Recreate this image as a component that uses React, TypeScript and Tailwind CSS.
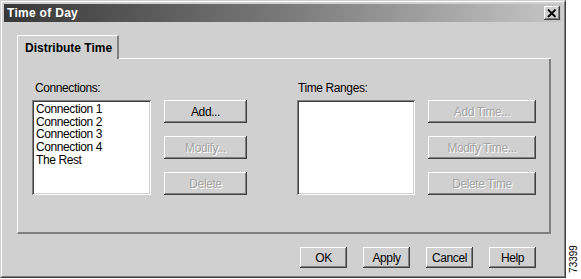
import React from "react";

const font = { fontFamily: '"Liberation Sans", Arial, sans-serif' };

function Btn({ label, w, h, disabled }: { label: string; w: string; h: string; disabled?: boolean }) {
  return (
    <div
      className={`${w} ${h} flex items-center justify-center bg-[#d0d0d0] text-[12px] tracking-[-0.4px] shadow-[inset_-1px_-1px_#404040,inset_1px_1px_#ffffff,inset_-2px_-2px_#808080] ${
        disabled ? "text-[#a4a4a4] [text-shadow:1px_1px_0_#ffffff]" : "text-black"
      }`}
    >
      {label}
    </div>
  );
}

function ListBox({ w, items }: { w: string; items: string[] }) {
  return (
    <div
      className={`${w} h-[95px] bg-white shadow-[inset_1px_1px_#808080,inset_-1px_-1px_#ffffff,inset_2px_2px_#404040,inset_-2px_-2px_#d0d0d0] pl-[4px] pt-[3px]`}
    >
      {items.map((t) => (
        <div key={t} className="text-[12px] leading-[12.7px] tracking-[-0.4px] text-black">
          {t}
        </div>
      ))}
    </div>
  );
}

export default function App() {
  return (
    <div className="relative w-[581px] h-[279px] bg-white" style={font}>
      <div className="w-[566px] h-[278px] border border-t-[#d0d0d0] border-l-[#d0d0d0] border-b-[#404040] border-r-[#404040]">
        <div className="w-full h-full border border-t-white border-l-white border-b-[#808080] border-r-[#808080] bg-[#d0d0d0] p-[2px] flex flex-col">
          {/* Title bar */}
          <div className="h-[18px] flex items-center justify-between bg-[linear-gradient(to_right,#383838,#7c7c7c_52%,#c6c6c6)] pl-[3px] pr-[2px]">
            <span className="text-white font-bold text-[12px] leading-none tracking-[0.3px]">Time of Day</span>
            <div className="w-[16px] h-[14px] bg-[#d0d0d0] shadow-[inset_-1px_-1px_#404040,inset_1px_1px_#ffffff,inset_-2px_-2px_#808080] flex items-center justify-center">
              <svg width="10" height="9" viewBox="0 0 10 9">
                <path d="M1 0.5 L8.5 8 M8.5 0.5 L1 8" stroke="#000" strokeWidth="1.8" />
              </svg>
            </div>
          </div>

          {/* Tabs */}
          <div className="mt-[13px] ml-[13px] w-[534px] flex items-end">
            <div className="w-[102px] h-[24px] border-t border-l border-white border-r-2 border-r-[#808080] flex items-center pl-[7px] pt-[1px]">
              <span className="font-bold text-[12px] text-black">Distribute Time</span>
            </div>
            <div className="flex-1 h-px bg-white" />
          </div>
          <div className="ml-[13px] w-[534px] h-[175px] border-l border-l-white border-r-2 border-r-[#808080] border-b-2 border-b-[#808080] pl-[14px] pt-[23px] flex">
            {/* Connections */}
            <div className="flex flex-col">
              <div className="text-[12px] leading-[13px] tracking-[-0.4px] text-black pl-[3px]">Connections:</div>
              <div className="mt-[5px] flex gap-[13px]">
                <ListBox w="w-[119px]" items={["Connection 1", "Connection 2", "Connection 3", "Connection 4", "The Rest"]} />
                <div className="flex flex-col gap-[13px]">
                  <Btn label="Add..." w="w-[83px]" h="h-[23px]" />
                  <Btn label="Modify..." w="w-[83px]" h="h-[23px]" disabled />
                  <Btn label="Delete" w="w-[83px]" h="h-[23px]" disabled />
                </div>
              </div>
            </div>
            {/* Time Ranges */}
            <div className="ml-[50px] flex flex-col">
              <div className="text-[12px] leading-[13px] tracking-[-0.4px] text-black pl-[1px]">Time Ranges:</div>
              <div className="mt-[5px] flex gap-[13px]">
                <ListBox w="w-[118px]" items={[]} />
                <div className="flex flex-col gap-[13px]">
                  <Btn label="Add Time..." w="w-[108px]" h="h-[23px]" disabled />
                  <Btn label="Modify Time..." w="w-[108px]" h="h-[23px]" disabled />
                  <Btn label="Delete Time" w="w-[108px]" h="h-[23px]" disabled />
                </div>
              </div>
            </div>
          </div>

          {/* Bottom buttons */}
          <div className="mt-[13px] pr-[26px] flex justify-end gap-[16px]">
            <Btn label="OK" w="w-[47px]" h="h-[21px]" />
            <Btn label="Apply" w="w-[47px]" h="h-[21px]" />
            <Btn label="Cancel" w="w-[47px]" h="h-[21px]" />
            <Btn label="Help" w="w-[47px]" h="h-[21px]" />
          </div>
        </div>
      </div>
      <div className="absolute left-[569px] top-[240px] w-[10px] h-[38px] flex items-center justify-center">
        <span className="block -rotate-90 text-[10px] leading-none text-black whitespace-nowrap">73399</span>
      </div>
    </div>
  );
}
